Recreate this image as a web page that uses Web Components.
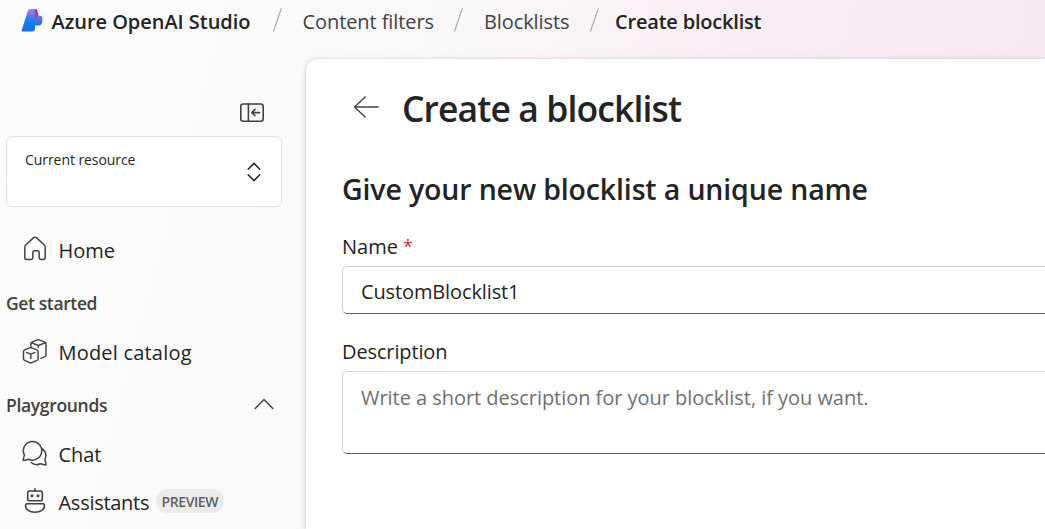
<!DOCTYPE html>
<html lang="en">
<head>
<meta charset="utf-8">
<title>Azure OpenAI Studio</title>
<style>
html,body{margin:0;height:100%;overflow:hidden}
body{font-family:"Open Sans","Noto Sans",sans-serif;color:#242424}
</style>
</head>
<body>
<studio-app></studio-app>
<script>
const define = (name, html, setup) => {
  const t = document.createElement('template');
  t.innerHTML = html;
  customElements.define(name, class extends HTMLElement {
    constructor() {
      super();
      this.attachShadow({mode: 'open'}).append(t.content.cloneNode(true));
    }
    connectedCallback() { if (setup) setup(this, this.shadowRoot); }
  });
};

// A single line of text, tracked so that it fills the advance width given in "w".
define('ui-text', `<style>
:host{display:block;white-space:nowrap;flex:none}
span{display:inline-block}
</style><span><slot></slot></span>`, (el, root) => {
  const span = root.querySelector('span');
  const w = parseFloat(el.getAttribute('w'));
  const n = el.textContent.length;
  el.style.width = w + 'px';
  span.style.letterSpacing = '0px';
  const natural = span.getBoundingClientRect().width;
  if (natural) span.style.letterSpacing = ((w - natural) / (n - 1)).toFixed(3) + 'px';
});

const icons = {
  logo: [22, 24, `<defs><linearGradient id="a" x1="0" y1="0" x2="0" y2="1"><stop offset="0" stop-color="#b27be4"/><stop offset=".3" stop-color="#5b7bec"/><stop offset=".6" stop-color="#1877ee"/><stop offset="1" stop-color="#1470e8"/></linearGradient><linearGradient id="b" x1="0" y1="0" x2="0" y2="1"><stop offset="0" stop-color="#a6238c"/><stop offset="1" stop-color="#e0409c"/></linearGradient><linearGradient id="c" x1="0" y1="0" x2="0" y2="1"><stop offset="0" stop-color="#6d70ea"/><stop offset="1" stop-color="#2470ec"/></linearGradient></defs><path stroke="none" fill="url(#c)" d="M14 7.700h5.300c1.300 0 2 .8 2 2v3.500c0 2.800-1.500 4.300-4.400 4.300H13.500z"/><path stroke="none" fill="url(#b)" d="M11 1h3.200c1.300 0 1.800.8 2.100 1.800l1.300 4.900c-1.200.3-1.700 1.300-1.900 2.500L14.500 16.500h-2z"/><path stroke="none" fill="url(#a)" d="M9.700 1h3c.9 0 1.400.6 1.400 1.500v17.700c0 2-1.100 3.300-3.200 3.300H1.400c-.7 0-1-.5-.8-1.100L6.800 3.100C7.300 1.700 8.200 1 9.700 1z"/>`],
  panel: [24, 20, `<rect x=".8" y="1" width="22.4" height="17.2" rx="2.4"/><path d="M8.400 1v17.200M19.600 9.600h-7.400M15 6.400l-3.200 3.200 3.200 3.200"/>`, 1.6],
  updown: [14, 20, `<path d="M1.200 7.200 7 1.400l5.800 5.800M1.200 12.800 7 18.600l5.800-5.800"/>`, 1.5],
  home: [24, 26, `<path d="M1.800 11.200c0-1 .4-1.700 1.100-2.400l7.500-6.900c1-.9 2.200-.9 3.200 0l7.500 6.900c.7.7 1.100 1.400 1.100 2.400v10.400c0 1.100-.7 1.800-1.800 1.800h-2.500c-1 0-1.700-.7-1.700-1.700v-5.200c0-1-.7-1.700-1.700-1.700h-3c-1 0-1.700.7-1.700 1.700v5.200c0 1-.7 1.700-1.700 1.700H3.600c-1.100 0-1.800-.7-1.800-1.800z"/>`, 1.5],
  model: [26, 26, `<path d="M8.900 8.500V5.400c0-.6.3-1 .9-1.200l5.500-2.300c.6-.2 1.200-.2 1.800 0l5.800 2.300c.8.3 1.100.8 1.100 1.600v11.200c0 .8-.4 1.300-1.100 1.600l-4 1.700M9.900 4.900l6.300 2.600 7-2.600M16.200 7.500v2M1.500 13.500c0-.8.400-1.300 1.100-1.600l5.200-2.100c.7-.2 1.200-.2 1.900 0l5.300 2.100c.8.3 1.100.8 1.100 1.600v7.300c0 .8-.4 1.300-1.100 1.600l-5.300 2.300c-.7.3-1.200.3-1.900 0l-5.200-2.300c-.7-.3-1.100-.8-1.100-1.600zM4.500 14.400l4.300 1.700 4.300-1.700M8.800 16.100v4.500"/>`, 1.45],
  chevron: [20, 12, `<path d="M1.200 10.600 10 1.600l8.800 9"/>`, 1.4],
  chat: [26, 26, `<path d="M10.700 1.500a9.300 9.300 0 1 1-4.200 17.700L2 20.500c-.6.100-1-.3-.9-.9l1.300-4.500A9.300 9.300 0 0 1 10.700 1.500zM9.200 22.500c2.400 2.100 6 2.700 9.100 1.300l4.900 1.200c.7.100 1-.3.9-.9l-1.200-4.600c1.600-3.600.8-7.700-2-10.400"/>`, 1.5],
  bot: [22, 26, `<rect x="3.700" y="3" width="14.600" height="9.800" rx="1.800"/><path d="M11 3V.8M3.100 15.800h15.800c.9 0 1.500.6 1.500 1.500v.7c0 3.600-3.700 6.200-9.400 6.200S1.600 21.600 1.600 18v-.7c0-.9.600-1.500 1.500-1.500z"/><circle cx="8" cy="7.800" r="1.500" fill="currentColor" stroke="none"/><circle cx="14" cy="7.800" r="1.500" fill="currentColor" stroke="none"/>`, 1.6],
  back: [26, 22, `<path d="M25 11H1.500M12.200.9 1.500 11l10.700 10.100"/>`, 1.4]
};
define('ui-icon', `<style>:host{display:block;flex:none;line-height:0}svg{display:block;fill:none;stroke:currentColor;stroke-linecap:round;stroke-linejoin:round}</style><div></div>`, (el, root) => {
  const [w, h, body, sw] = icons[el.getAttribute('name')];
  root.querySelector('div').innerHTML = `<svg width="${w}" height="${h}" viewBox="0 0 ${w} ${h}" stroke-width="${sw || 1.4}">${body}</svg>`;
});

define('crumb-separator', `<style>:host{display:block;flex:none;width:11px;height:24px}svg{display:block}</style>
<svg width="11" height="24"><path d="M1.500 23.500 9.300.5" stroke="#b0b0b0" stroke-width="1.300"/></svg>`);

define('app-header', `<style>
:host{display:flex;align-items:center;height:44px;padding:0 0 15px 20px;font-size:20px;line-height:28px}
.brand{font-weight:600;margin-left:9px}
crumb-separator{margin-top:-4px}
.link{color:#424242}.here{font-weight:600}
ui-icon{margin:-4px 0 0 .5px}
</style>
<ui-icon name="logo"></ui-icon>
<ui-text class="brand" w="199">Azure OpenAI Studio</ui-text>
<crumb-separator style="margin-left:21px"></crumb-separator>
<ui-text class="link" style="margin-left:20px" w="131.500">Content filters</ui-text>
<crumb-separator style="margin-left:19px"></crumb-separator>
<ui-text class="link" style="margin-left:20px" w="85.500">Blocklists</ui-text>
<crumb-separator style="margin-left:19px"></crumb-separator>
<ui-text class="here" style="margin-left:15.500px" w="146.500">Create blocklist</ui-text>`);

define('resource-picker', `<style>
:host{display:flex;box-sizing:border-box;width:276px;height:71px;margin:0 0 19px 6px;border:1px solid #e0e0e0;border-radius:6px;background:#fff;justify-content:space-between;padding:12px 20px 0 18px;font-size:14px;line-height:22px}
ui-icon{margin-top:13px}
</style><ui-text w="110.500">Current resource</ui-text><ui-icon name="updown"></ui-icon>`);

define('nav-item', `<style>
:host{display:flex;height:48px;align-items:center;padding-left:22px;font-size:20px;line-height:28px}
.icon{width:26px;display:flex;justify-content:center;margin:-2px 10.500px 0 0;color:#424242}
::slotted(ui-text){margin-top:2px}
::slotted(nav-badge){margin-left:6.500px}
</style><div class="icon"></div><slot></slot>`, (el, root) => {
  const icon = document.createElement('ui-icon');
  icon.setAttribute('name', el.getAttribute('icon'));
  root.querySelector('.icon').replaceChildren(icon);
});

define('nav-badge', `<style>:host{display:flex;align-items:center;justify-content:center;width:68px;height:24px;border-radius:12px;background:#ebebeb;color:#616161;font-size:14px;line-height:24px;font-weight:550}::slotted(ui-text){margin-top:1px}</style><slot></slot>`);

define('nav-heading', `<style>:host{display:flex;height:50px;padding:4px 32px 0 6px;align-items:center;justify-content:space-between;font-size:17.500px;line-height:26px;font-weight:600;color:#424242}::slotted(ui-icon){margin-top:-2px}</style><slot></slot>`);

define('side-nav', `<style>
:host{display:block;width:306px;flex:none}
.toggle{display:flex;justify-content:flex-end;height:33px;padding:44px 42px 0 0;color:#424242}
nav-badge{margin-top:-2px}
</style>
<div class="toggle"><ui-icon name="panel"></ui-icon></div>
<resource-picker></resource-picker>
<nav-item icon="home"><ui-text w="56.500">Home</ui-text></nav-item>
<nav-heading><ui-text w="91.500">Get started</ui-text></nav-heading>
<nav-item icon="model"><ui-text w="133">Model catalog</ui-text></nav-item>
<nav-heading><ui-text w="101.500">Playgrounds</ui-text><ui-icon name="chevron"></ui-icon></nav-heading>
<nav-item icon="chat"><ui-text w="43">Chat</ui-text></nav-item>
<nav-item icon="bot"><ui-text w="91">Assistants</ui-text><nav-badge><ui-text w="57">PREVIEW</ui-text></nav-badge></nav-item>`);

define('form-field', `<style>
:host{display:block;font-size:20px}
.label{display:flex;height:28px;line-height:28px;margin-bottom:5px}
.box{box-sizing:border-box;height:var(--box-height,48px);border:1px solid #d1d1d1;border-right:0;border-bottom-color:#616161;border-radius:5px 0 0 5px;background:#fff;padding:var(--box-pad,11px) 0 0 18px;line-height:28px}
</style><div class="label"><slot name="label"></slot></div><div class="box"><slot></slot></div>`);

define('blocklist-panel', `<style>
:host{display:block;flex:1;min-width:0;box-sizing:border-box;background:#fff;border-radius:12px 0 0 0;box-shadow:0 0 2px rgba(0,0,0,.2),0 2px 8px rgba(0,0,0,.12);padding:25px 0 0 36px}
.title{display:flex;align-items:center;height:48px;padding-left:11px;font-size:35.500px;line-height:48px;font-weight:600}
.title ui-icon{margin:-2px 23px 0 0;color:#424242}
.sub{margin-top:37px;font-size:28.500px;line-height:40px;font-weight:600}
form-field{margin-top:24px}
.star{color:#d13438;margin-left:5px;font-size:18px;line-height:26px}
.hint{color:#707070}
</style>
<div class="title"><ui-icon name="back"></ui-icon><ui-text w="280">Create a blocklist</ui-text></div>
<ui-text class="sub" w="526">Give your new blocklist a unique name</ui-text>
<form-field><ui-text slot="label" w="56">Name</ui-text><span class="star" slot="label">*</span><ui-text w="158.500">CustomBlocklist1</ui-text></form-field>
<form-field style="--box-height:83px;--box-pad:12px"><ui-text slot="label" w="105.500">Description</ui-text><ui-text class="hint" w="507.500">Write a short description for your blocklist, if you want.</ui-text></form-field>`);

define('studio-app', `<style>
:host{display:flex;flex-direction:column;height:100vh;overflow:hidden;background:linear-gradient(105deg,#fbfbfb 0,#fafafa 25%,#f9f5f8 46%,#f9eef5 62%,#f7e9f3 88%)}
.body{display:flex;flex:1;min-height:0}
</style><app-header></app-header><div class="body"><side-nav></side-nav><blocklist-panel></blocklist-panel></div>`);
</script>
</body>
</html>
